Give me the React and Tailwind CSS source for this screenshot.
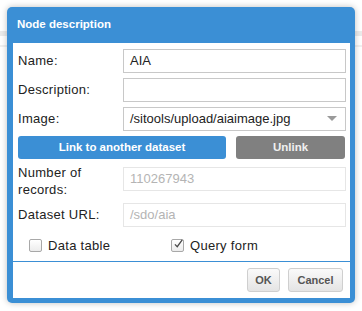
import React from "react";

const font = { fontFamily: '"Liberation Sans", Arial, sans-serif' };

function Field({ label, children, className = "" }) {
  return (
    <div className={"flex " + className}>
      <div className="w-[105px] shrink-0 self-center text-[13px] text-[#222] tracking-[0.3px]">{label}</div>
      {children}
    </div>
  );
}

function TextBox({ value, disabled }) {
  return (
    <div
      className={
        "h-[24px] w-[223px] border px-[6px] flex items-center text-[13px] " +
        (disabled ? "border-[#e6e6e6] text-[#b4b4b4]" : "border-[#c8c8c8] text-[#222]")
      }
    >
      {value}
    </div>
  );
}

function Check({ checked, label }) {
  return (
    <div className="flex items-center gap-[6px]">
      <div className="w-[13px] h-[13px] border border-[#a8a8a8] rounded-[2px] bg-gradient-to-b from-white to-[#ececec] flex items-center justify-center">
        {checked && (
          <svg width="13" height="14" viewBox="0 0 13 14" className="-mt-[4px] ml-[1px]">
            <path d="M2.5 7.5 L5.5 10.5 L12 1.5" fill="none" stroke="#4a4a4a" strokeWidth="1.7" />
          </svg>
        )}
      </div>
      <span className="text-[13px] text-[#222] tracking-[0.3px]">{label}</span>
    </div>
  );
}

export default function App() {
  return (
    <div className="relative w-[362px] h-[311px] bg-white overflow-hidden" style={font}>
      <div className="h-[31px]"></div>
      <div className="h-[5px] bg-[#ebebeb]"></div>
      <div className="h-[9px]"></div>
      <div className="h-[2px] bg-[#f0f0f0]"></div>

      <div className="absolute left-[7px] top-[7px] w-[348px] h-[296px] bg-[#3b8fd5] rounded-[5px] shadow-[0_0_6px_rgba(0,0,0,0.25)] flex flex-col">
        <div className="h-[36px] shrink-0 flex items-center pl-[10px] text-white font-bold text-[11.5px]">
          Node description
        </div>
        <div className="ml-[6px] mr-[5px] mb-[5px] flex-1 bg-white flex flex-col">
          <div className="flex-1 pl-[5px] pr-[4px] pt-[6px]">
            <Field label="Name:">
              <TextBox value="AIA" />
            </Field>
            <Field label="Description:" className="mt-[5px]">
              <TextBox value="" />
            </Field>
            <Field label="Image:" className="mt-[5px]">
              <div className="h-[24px] w-[223px] border border-[#c8c8c8] pl-[6px] pr-[8px] flex items-center justify-between text-[13px] text-[#222]">
                <span>/sitools/upload/aiaimage.jpg</span>
                <svg width="10" height="6" viewBox="0 0 10 6">
                  <path d="M0 0 L10 0 L5 5 Z" fill="#9a9a9a" />
                </svg>
              </div>
            </Field>
            <div className="flex gap-[10px] mt-[5px]">
              <div className="w-[208px] h-[23px] bg-[#3b8fd5] rounded-[3px] flex items-center justify-center text-white font-bold text-[11.5px]">
                Link to another dataset
              </div>
              <div className="w-[109px] h-[23px] bg-[#808080] rounded-[3px] flex items-center justify-center text-[#f0f0f0] font-bold text-[11.5px]">
                Unlink
              </div>
            </div>
            <div className="flex items-start mt-[8px]">
              <div className="w-[105px] shrink-0 -mt-[3px] text-[13px] leading-[17px] text-[#222] tracking-[0.3px]">
                Number of
                <br />
                records:
              </div>
              <TextBox value="110267943" disabled />
            </div>
            <Field label="Dataset URL:" className="mt-[5px]">
              <TextBox value="/sdo/aia" disabled />
            </Field>
            <div className="flex mt-[9px] pl-[11px]">
              <div className="w-[142px]">
                <Check label="Data table" />
              </div>
              <Check checked label="Query form" />
            </div>
          </div>
          <div className="h-[37px] shrink-0 border-t border-[#3b8fd5] flex justify-end items-start gap-[8px] pt-[6px] pr-[7px]">
            <div className="w-[33px] h-[24px] border border-[#cfcfcf] rounded-[3px] bg-gradient-to-b from-[#fafafa] to-[#e4e4e4] flex items-center justify-center text-[11px] font-bold text-[#555]">
              OK
            </div>
            <div className="w-[55px] h-[24px] border border-[#cfcfcf] rounded-[3px] bg-gradient-to-b from-[#fafafa] to-[#e4e4e4] flex items-center justify-center text-[11px] font-bold text-[#555]">
              Cancel
            </div>
          </div>
        </div>
      </div>
    </div>
  );
}
